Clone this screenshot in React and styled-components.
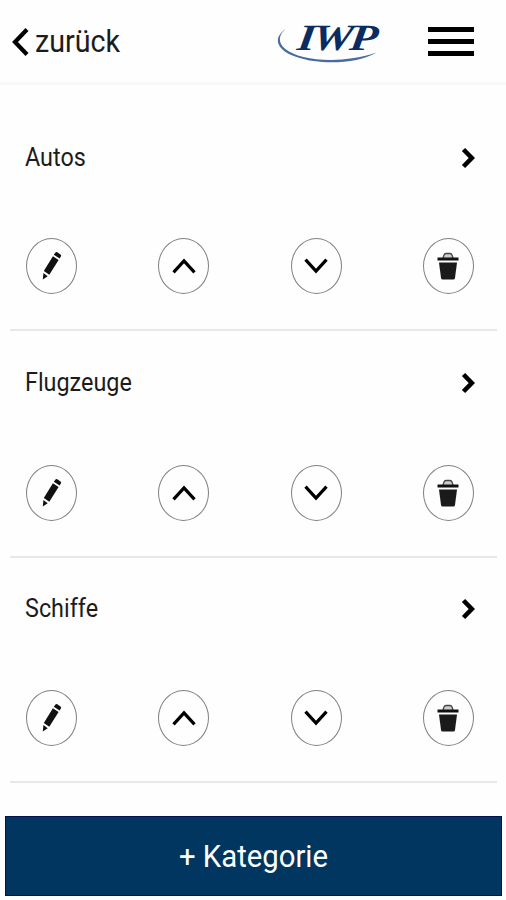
import React from "react";
import styled, { createGlobalStyle } from "styled-components";

const GlobalStyle = createGlobalStyle`
  * {
    box-sizing: border-box;
  }
  body {
    margin: 0;
    background: #fefefe;
    font-family: Roboto, "Liberation Sans", sans-serif;
    color: #1c1c1c;
  }
  button {
    padding: 0;
    border: none;
    background: none;
    font: inherit;
    color: inherit;
  }
  svg {
    display: block;
  }
`;

const Page = styled.div`
  width: 506px;
  height: 900px;
  display: flex;
  flex-direction: column;
  overflow: hidden;
`;

const Header = styled.header`
  height: 85px;
  display: flex;
  align-items: center;
  padding: 1px 32px 0 12px;
  border-bottom: 3px solid #f8f8f8;
`;

const BackButton = styled.button`
  display: flex;
  align-items: center;
  gap: 5px;
  margin-right: auto;
`;

const BackLabel = styled.span`
  font-size: 31px;
  line-height: 36px;
  padding-top: 1px;
  transform: scaleX(0.925);
  transform-origin: left;
`;

const MenuButton = styled.button`
  display: flex;
  flex-direction: column;
  gap: 7px;
  margin-left: 42px;
`;

const Bar = styled.span`
  width: 46px;
  height: 5px;
  background: #000;
`;

const List = styled.ul`
  margin: 0;
  padding: 20px 9px 0 10px;
  list-style: none;
`;

const Item = styled.li`
  height: ${(props) => props.$height}px;
  display: flex;
  flex-direction: column;
  justify-content: space-between;
  padding: ${(props) => props.$top}px 22px 35px 16px;
  border-bottom: 2px solid #e8e8e8;
`;

const TitleRow = styled.div`
  display: flex;
  align-items: center;
  justify-content: space-between;
  height: 32px;
`;

const Title = styled.span`
  font-size: 25px;
  line-height: 32px;
  margin-left: -1px;
  transform: scaleX(0.935);
  transform-origin: left;
`;

const Actions = styled.div`
  display: flex;
  justify-content: space-between;
  padding-right: 1px;
`;

const RoundButton = styled.button`
  width: 51px;
  height: 56px;
  display: flex;
  align-items: center;
  justify-content: center;
  border: 1px solid #808080;
  border-radius: 50%;
`;

const AddButton = styled.button`
  height: 80px;
  margin: auto 4px 4px 5px;
  background: #00365f;
  border: 1px solid #07104f;
  color: #fff;
`;

const AddLabel = styled.span`
  display: block;
  font-size: 31px;
  line-height: 36px;
  padding-top: 2px;
  transform: scaleX(0.945);
`;

function Logo() {
  return (
    <svg width="110" height="56" viewBox="0 -5 110 56">
      <path
        d="M9.500 10C-3 19-1 31 22 38.500c22 7.500 60 6.500 78.500-5-23 8-52 9.500-73 4.500C4 32.500-2 20 9.500 10Z"
        fill="#4a6b9d"
      />
      <text
        x="24.500"
        y="30.500"
        textLength="77"
        lengthAdjust="spacingAndGlyphs"
        fontFamily="Liberation Serif, serif"
        fontSize="37"
        fontStyle="italic"
        fontWeight="700"
        letterSpacing="-2.5"
        fill="#0a2c60"
        transform="skewX(-8)"
      >
        IWP
      </text>
    </svg>
  );
}

function BackIcon() {
  return (
    <svg width="18" height="28" viewBox="0 0 18 28">
      <path d="M15 1.5 3 14l12 12.5" fill="none" stroke="#000" strokeWidth="4.2" />
    </svg>
  );
}

function OpenIcon() {
  return (
    <svg width="14" height="22" viewBox="0 0 14 22">
      <path d="M2.500 2.500 10.800 11l-8.300 8.500" fill="none" stroke="#000" strokeWidth="4.600" />
    </svg>
  );
}

function PencilIcon() {
  return (
    <svg width="20" height="30" viewBox="0 0 20 30">
      <path
        d="M13.500 1.600q.7-1 1.800-.3l3.200 2.300q1 .8.500 1.700l-1.400 2.300-5.800-3.800ZM10.900 5.200l5.700 3.900-9.300 14.700-5.500-3.800ZM1.400 22l4.300 3.200L.8 28.500Z"
        fill="#111"
      />
    </svg>
  );
}

function UpIcon() {
  return (
    <svg width="24" height="16" viewBox="0 0 24 16">
      <path d="M1.500 14.300 12 2.800l10.500 11.500" fill="none" stroke="#000" strokeWidth="3.200" />
    </svg>
  );
}

function DownIcon() {
  return (
    <svg width="24" height="16" viewBox="0 0 24 16">
      <path d="M1.500 1.700 12 13.200 22.500 1.700" fill="none" stroke="#000" strokeWidth="3.200" />
    </svg>
  );
}

function TrashIcon() {
  return (
    <svg width="22" height="28" viewBox="0 0 22 28">
      <path d="M6 6 7 3q.5-1.500 2-1.500h4q1.500 0 2 1.500l1 3" fill="#ccc" stroke="#444" strokeWidth="1.300" />
      <path d="M.5 5.500h21v3H.5Z" fill="#111" />
      <path d="M2 10.500h18l-2 15.500q-.2 1.500-1.700 1.500H5.700q-1.500 0-1.700-1.500Z" fill="#1a1a1a" />
    </svg>
  );
}

const categories = [
  { name: "Autos", height: 226, top: 37 },
  { name: "Flugzeuge", height: 227, top: 36 },
  { name: "Schiffe", height: 225, top: 35 },
];

function Category({ name, height, top }) {
  return (
    <Item $height={height} $top={top}>
      <TitleRow>
        <Title>{name}</Title>
        <OpenIcon />
      </TitleRow>
      <Actions>
        <RoundButton aria-label="Bearbeiten"><PencilIcon /></RoundButton>
        <RoundButton aria-label="Nach oben"><UpIcon /></RoundButton>
        <RoundButton aria-label="Nach unten"><DownIcon /></RoundButton>
        <RoundButton aria-label="Löschen"><TrashIcon /></RoundButton>
      </Actions>
    </Item>
  );
}

function App() {
  return (
    <Page>
      <GlobalStyle />
      <Header>
        <BackButton>
          <BackIcon />
          <BackLabel>zurück</BackLabel>
        </BackButton>
        <Logo />
        <MenuButton aria-label="Menü">
          <Bar />
          <Bar />
          <Bar />
        </MenuButton>
      </Header>
      <List>
        {categories.map((category) => (
          <Category key={category.name} {...category} />
        ))}
      </List>
      <AddButton>
        <AddLabel>+ Kategorie</AddLabel>
      </AddButton>
    </Page>
  );
}

export default App;
